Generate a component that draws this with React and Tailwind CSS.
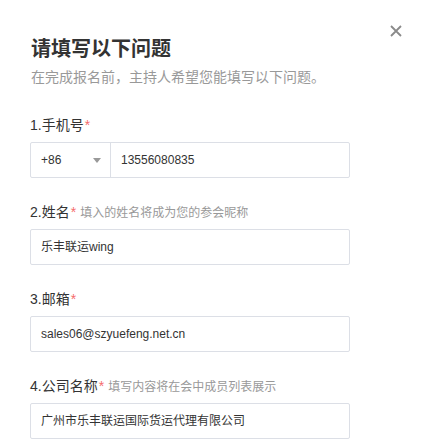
import React from "react";

const font = {
  fontFamily: '"Liberation Sans", "Noto Sans CJK SC", sans-serif',
};

function Label({ no, text, hint }) {
  return (
    <div className="flex items-baseline h-5 leading-5 mb-[7px]">
      <span className="text-[14px] text-[#333]">
        {no}.{text}
      </span>
      <span className="text-[14px] text-[#f56c6c] ml-px">*</span>
      {hint && <span className="text-[12px] text-[#999] ml-1">{hint}</span>}
    </div>
  );
}

function Field({ value }) {
  return (
    <div className="w-[320px] h-9 border border-[#dcdfe6] rounded-[2px] flex items-center px-[10px] text-[12px] text-[#333]">
      {value}
    </div>
  );
}

export default function App() {
  return (
    <div className="w-[425px] h-[448px] bg-white relative overflow-hidden" style={font}>
      <button className="absolute left-[390px] top-[25px] w-3 h-3">
        <svg viewBox="0 0 12 12" width="12" height="12">
          <path d="M1 1L11 11M11 1L1 11" stroke="#8a8a8a" strokeWidth="1.8" />
        </svg>
      </button>

      <div className="pl-[30px] pt-[35px]">
        <h1 className="text-[20px] leading-7 font-bold text-[#333] pl-px">请填写以下问题</h1>
        <p className="text-[14px] leading-5 text-[#999] mt-1 pl-px">
          在完成报名前，主持人希望您能填写以下问题。
        </p>

        <div className="mt-[28px] flex flex-col gap-[24px]">
          <div>
            <Label no="1" text="手机号" />
            <div className="w-[320px] h-9 border border-[#dcdfe6] rounded-[2px] flex text-[12px] text-[#333]">
              <div className="w-[80px] border-r border-[#dcdfe6] flex items-center justify-between pl-[10px] pr-[9px]">
                <span>+86</span>
                <svg width="8" height="5" viewBox="0 0 8 5">
                  <path d="M0 0H8L4 5Z" fill="#999" />
                </svg>
              </div>
              <div className="flex items-center pl-[10px]">13556080835</div>
            </div>
          </div>

          <div>
            <Label no="2" text="姓名" hint="填入的姓名将成为您的参会昵称" />
            <Field value="乐丰联运wing" />
          </div>

          <div>
            <Label no="3" text="邮箱" />
            <Field value="sales06@szyuefeng.net.cn" />
          </div>

          <div>
            <Label no="4" text="公司名称" hint="填写内容将在会中成员列表展示" />
            <Field value="广州市乐丰联运国际货运代理有限公司" />
          </div>
        </div>
      </div>
    </div>
  );
}
